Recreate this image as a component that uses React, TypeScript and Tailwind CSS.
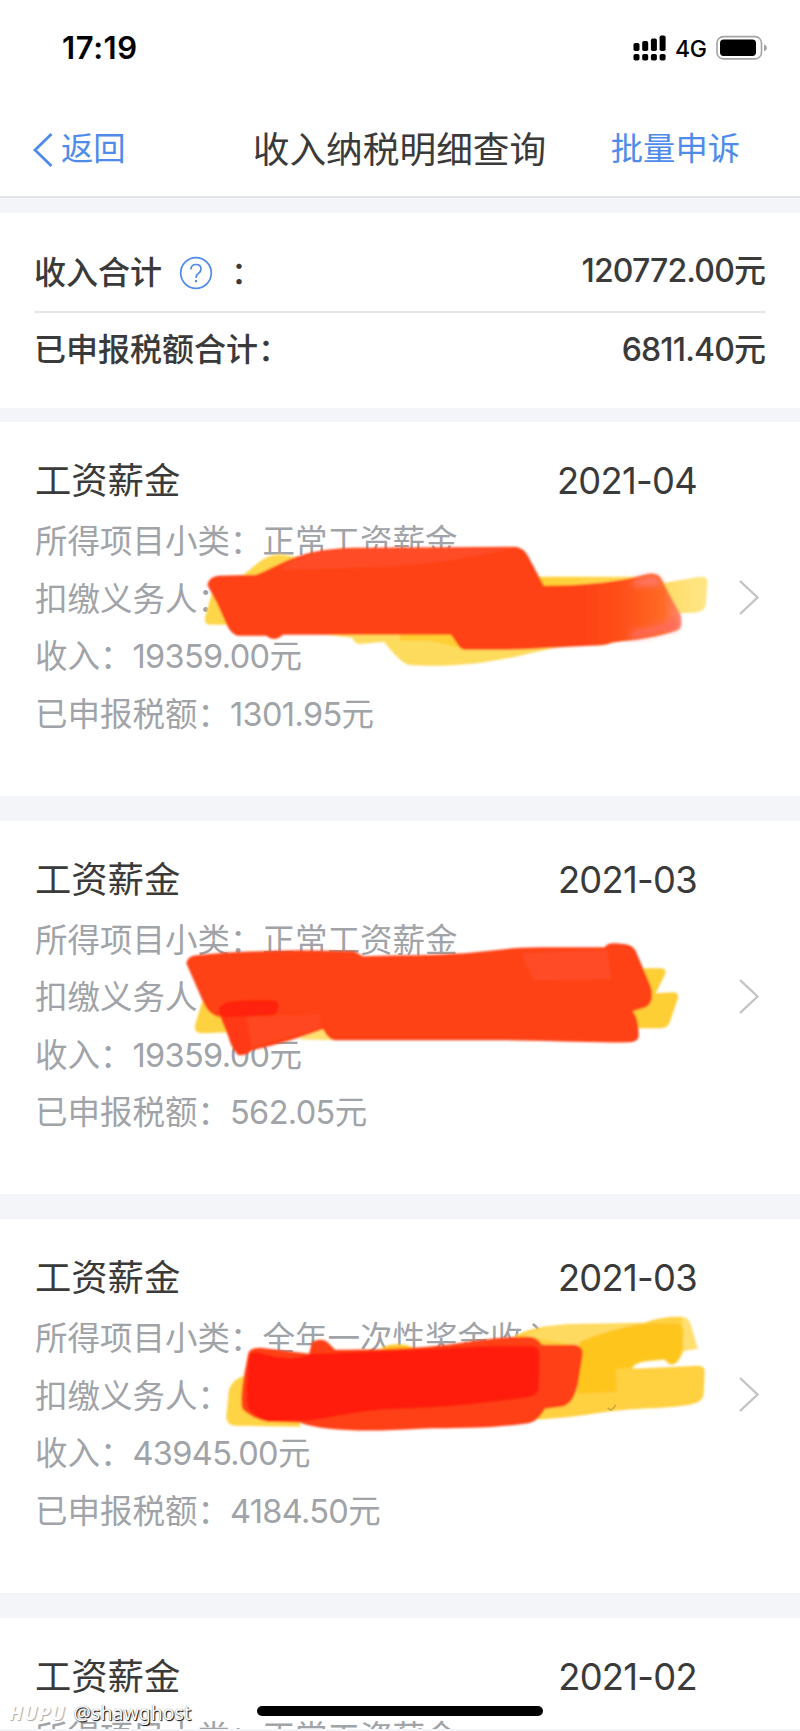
import type { ReactNode } from "react";

interface IncomeRecord {
    title: string;
    month: string;
    category: string;
    income: string;
    tax: string;
    marks?: ReactNode;
}

// Marker strokes use page coordinates, each card shifts its own viewBox
const AprilMarks = () => (
    <svg
        className="absolute inset-0 h-full w-full"
        viewBox="0 422 800 374"
        fill="none"
    >
        <defs>
            <linearGradient id="april-red" gradientUnits="userSpaceOnUse" x1="585" y1="0" x2="682" y2="0">
                <stop offset="0" stopColor="#ff4315" />
                <stop offset="0.4" stopColor="#ff501a" />
                <stop offset="0.8" stopColor="#ff6a24" />
                <stop offset="1" stopColor="#ff8878" />
            </linearGradient>
            <linearGradient id="april-yellow" gradientUnits="userSpaceOnUse" x1="540" y1="0" x2="700" y2="0">
                <stop offset="0" stopColor="#ffcf33" />
                <stop offset="0.7" stopColor="#ffd95a" />
                <stop offset="1" stopColor="#ffe483" />
            </linearGradient>
            <filter id="soft" x="-5%" y="-20%" width="110%" height="140%">
                <feGaussianBlur stdDeviation="1.1" />
            </filter>
            <filter id="softer" x="-50%" y="-50%" width="200%" height="200%">
                <feGaussianBlur stdDeviation="3" />
            </filter>
        </defs>
        <g filter="url(#soft)">
            <path
                d="M242 576 L258 563 Q270 553 284 555 L300 558 L300 600 L228 625 L209 625 Q203 624 205 617 L212 592 Z"
                fill="#fdd64a"
            />
            <path d="M535 577 H635 L665 583 L700 577 Q708 576 708 582 L706 606 Q704 613 693 613 L660 614 L540 600 Z" fill="url(#april-yellow)" />
            <path
                d="M300 632 L352 638 Q356 646 363 644 L384 642 C392 652 398 660 408 665 C440 668 480 665 520 656 C545 650 570 645 585 643 L585 630 Z"
                fill="#fddb5c"
            />
            <path d="M400 632 H454 L460 648 L430 641 L400 641 Z" fill="#ffce30" />
            <path
                d="M207 585 Q209 577 218 576 L256 575 C272 569 284 560 306 554 C330 548 350 548 370 548 L515 547 Q524 548 528 556 L544 586 C580 586 610 583 633 578 L650 574 Q659 573 662 580 L681 615 Q683 628 679 630 C660 637 635 640 612 643 Q607 646 590 646 C560 647 530 650 500 650 L467 650 Q461 651 458 645 L451 635 L283 635 Q274 643 266 636 L238 636 Q231 635 226 624 L217 604 Z"
                fill="url(#april-red)"
            />
            <path d="M282 567 C315 548 350 549 370 549 L515 548 Q480 556 440 562 C400 568 340 568 282 570 Z" fill="#ff4c28" />
        </g>
        <g filter="url(#softer)">
            <path d="M635 580 L652 576 L659 578 L662 586 Q648 585 634 587 Z" fill="#ff7766" />
            <path d="M632 631 Q655 628 677 618 L678 628 Q655 636 630 639 Z" fill="#ff6a5c" />
        </g>
    </svg>
);

const MarchMarks = () => (
    <svg
        className="absolute inset-0 h-full w-full"
        viewBox="0 820.5 800 374"
        fill="none"
    >
        <g filter="url(#soft)">
            <path d="M202 1001 L195 1024 Q193 1033 202 1033 L230 1032 L230 1008 Z" fill="#fdd240" />
            <path d="M298 1039 L325 1024 L334 1040 Z" fill="#ffe070" />
            <path
                d="M636 968 H662 Q668 969 665 975 L656 993 L674 992 Q680 993 678 999 L670 1022 Q668 1028 661 1028 L630 1028 L625 1000 Z"
                fill="#fece35"
            />
            <path
                d="M186 963 Q187 956 196 955 C230 951 260 951 300 950 L354 951 L363 956 L400 955 C440 955 470 953 495 950 Q515 947 540 947 L605 947 Q608 942 616 943 L626 944 Q634 945 637 953 L651 986 Q656 1005 643 1008 L633 1011 Q639 1018 639 1034 Q640 1042 630 1042 C590 1043 550 1040 500 1040 L334 1040 Q328 1039 323 1029 Q285 1043 252 1050 Q246 1056 238 1055 Q231 1048 228 1036 L220 1017 Q210 1016 204 1004 Z"
                fill="#ff4217"
            />
            <path d="M522 953 L607 950 L612 979 L534 980 Q529 970 522 955 Z" fill="#ff4b28" />
            <path d="M222 1018 L245 1016 Q248 1034 251 1046 Q246 1056 238 1054 Q230 1040 222 1018 Z" fill="#ff3916" />
            <path d="M248 1017 L320 1014 L320 1028 L251 1046 Z" fill="#ff4720" />
            <path d="M226 1002 Q250 999 273 1000 Q280 1001 278 1008 Q278 1015 270 1015 L224 1017 Q217 1014 219 1007 Z" fill="#ff2408" />
        </g>
    </svg>
);

const BonusMarks = () => (
    <svg
        className="absolute inset-0 h-full w-full"
        viewBox="0 1219 800 374"
        fill="none"
    >
        <g filter="url(#soft)">
            <path d="M246 1375 Q228 1381 228 1396 L226 1418 Q227 1426 236 1426 L300 1427 L300 1375 Z" fill="#fed444" />
            <path d="M380 1349 Q390 1343 405 1345 L420 1350 Z" fill="#ffc62a" />
            <path
                d="M515 1336 C535 1325 570 1323 600 1324 L645 1323 Q660 1317 680 1317 Q689 1317 691 1325 L698 1349 L684 1351 Q679 1364 673 1365 Q668 1365 665 1360 L644 1362 Q634 1364 633 1369 L698 1366 Q706 1366 705 1373 L704 1395 Q703 1403 690 1405 C660 1410 640 1407 600 1413 Q570 1418 535 1420 L500 1400 Z"
                fill="#ffd040"
            />
            <path d="M525 1336 C545 1325 570 1323 600 1325 L645 1324 Q615 1330 583 1341 L578 1346 Z" fill="#ffda60" />
            <path d="M682 1318 Q690 1318 692 1328 L698 1349 L684 1351 Z" fill="#ffdf70" />
            <path
                d="M580 1342 Q620 1326 648 1324 L678 1324 Q684 1325 684 1334 L682 1350 Q678 1364 672 1364 L665 1359 Q635 1360 630 1368 L616 1369 L617 1392 L578 1394 Z"
                fill="#fec51e"
            />
            <path
                d="M248 1354 Q249 1348 260 1348 L309 1354 L312 1342 Q323 1337 329 1344 L335 1350 C400 1350 440 1347 475 1341 Q510 1336 530 1337 Q538 1338 542 1345 L575 1345 Q583 1346 583 1354 L578 1385 Q573 1406 561 1407 L545 1409 Q538 1423 525 1424 C490 1429 460 1428 420 1429 C370 1432 325 1432 300 1423 L268 1422 Q253 1420 242 1409 Q240 1400 243 1380 Z"
                fill="#ff4014"
            />
            <path
                d="M249 1355 Q253 1350 266 1355 Q290 1362 312 1354 C390 1351 450 1349 490 1346 L530 1346 Q540 1346 540 1356 L539 1388 Q538 1397 525 1398 C480 1404 440 1408 400 1409 C345 1411 320 1422 300 1421 L268 1422 Q250 1415 247 1406 Q245 1390 249 1355 Z"
                fill="#ff1e08"
            />
        </g>
        <path d="M608 1408 Q612 1413 616 1405" stroke="#c8a53c" strokeWidth="1.5" />
    </svg>
);

const RECORDS: IncomeRecord[] = [
    { title: "工资薪金", month: "2021-04", category: "正常工资薪金", income: "19359.00", tax: "1301.95", marks: <AprilMarks /> },
    { title: "工资薪金", month: "2021-03", category: "正常工资薪金", income: "19359.00", tax: "562.05", marks: <MarchMarks /> },
    { title: "工资薪金", month: "2021-03", category: "全年一次性奖金收入", income: "43945.00", tax: "4184.50", marks: <BonusMarks /> },
    { title: "工资薪金", month: "2021-02", category: "正常工资薪金", income: "19359.00", tax: "562.05" },
];

const StatusBar = () => (
    <div className="flex h-[98px] items-start justify-between pt-[30px] pr-[32px] pl-[62px] text-black">
        <span className="text-[31px] leading-[36px] font-semibold tracking-[0.6px]">17:19</span>
        <div className="flex h-[36px] items-center">
            <svg className="h-[26px] w-[34px]" viewBox="0 0 34 26" fill="currentColor">
                <rect x="0.5" y="8" width="6" height="8" rx="1.8" />
                <rect x="9.2" y="6" width="6" height="10" rx="1.8" />
                <rect x="17.9" y="3.5" width="6" height="12.5" rx="1.8" />
                <rect x="26.6" y="0.5" width="6" height="15.5" rx="1.8" />
                <rect x="0.5" y="19" width="6" height="6.5" rx="1.8" />
                <rect x="9.2" y="19" width="6" height="6.5" rx="1.8" />
                <rect x="17.9" y="19" width="6" height="6.5" rx="1.8" />
                <rect x="26.6" y="19" width="6" height="6.5" rx="1.8" />
            </svg>
            <span className="ml-[8px] w-[33px] pt-[2px] text-[23px] leading-[34px] font-medium tracking-[-0.3px]">4G</span>
            <svg className="ml-[8px] h-[26px] w-[52px]" viewBox="0 0 52 26" fill="none">
                <rect x="1" y="1.6" width="44.5" height="22.3" rx="6.5" stroke="#a3a3a3" strokeWidth="1.6" />
                <rect x="4" y="4.6" width="36" height="16.3" rx="3.6" fill="#000" />
                <path d="M48 9.5 Q51 10.5 51 12.9 Q51 15.3 48 16.3 Z" fill="#a3a3a3" />
            </svg>
        </div>
    </div>
);

const NavBar = () => (
    <div className="grid h-[98px] grid-cols-[1fr_auto_1fr] items-center pt-[5px] text-[32.3px] text-[#4f8bea]">
        <div className="flex items-center pl-[33px]">
            <svg className="h-[36px] w-[20px]" viewBox="0 0 20 36" fill="none">
                <path d="M18.5 2 L2 18 L18.5 34" stroke="currentColor" strokeWidth="2.8" />
            </svg>
            <span className="ml-[8px]">返回</span>
        </div>
        <h1 className="-ml-px text-[36.7px] text-[#3a3a3a]">收入纳税明细查询</h1>
        <span className="justify-self-end pr-[60px]">批量申诉</span>
    </div>
);

const Summary = () => (
    <section className="h-[195px] shrink-0 bg-white px-[34px] text-[32px] font-medium text-[#3a3a3a]">
        <div className="flex h-[100px] items-center justify-between border-b-2 border-[#e6e6e6] pt-[22px]">
            <div className="flex items-center">
                <span>收入合计</span>
                <svg className="ml-[17px] h-[34px] w-[34px]" viewBox="0 0 34 34" fill="none" stroke="#4f8bea">
                    <circle cx="17" cy="17" r="15.3" strokeWidth="1.7" />
                    <path d="M12 13.5 Q12 8.5 17 8.5 Q22 8.5 22 13 Q22 15.5 19.5 17.3 Q17 19 17 22" strokeWidth="1.7" />
                    <path d="M17 24 V26.3" strokeWidth="2" />
                </svg>
                <span className="ml-[18px]">：</span>
            </div>
            <span className="mb-[5px]">
                <span className="tracking-[-0.85px]">120772.00</span>元
            </span>
        </div>
        <div className="flex h-[74px] items-center justify-between">
            <span>已申报税额合计：</span>
            <span>
                <span className="tracking-[-0.85px]">6811.40</span>元
            </span>
        </div>
    </section>
);

const Amount = ({ value }: { value: string }) => (
    <>
        <span className="tracking-[-0.65px]">{value}</span>元
    </>
);

const RecordCard = ({ record }: { record: IncomeRecord }) => (
    <article className="relative flex h-[373.5px] shrink-0 items-start justify-between bg-white pt-[28px] pr-[40px] pl-[35px]">
        <div className="w-[662px]">
            <div className="flex h-[63px] items-center justify-between text-[36.3px] text-[#3a3a3a]">
                <h2>{record.title}</h2>
                <span className="tracking-[-0.7px]">{record.month}</span>
            </div>
            <div className="text-[32.5px] leading-[57.5px] whitespace-nowrap text-[#a0a3a7]">
                <p>所得项目小类：{record.category}</p>
                <p>扣缴义务人：</p>
                <p>收入：<Amount value={record.income} /></p>
                <p>已申报税额：<Amount value={record.tax} /></p>
            </div>
        </div>
        <svg className="mt-[129px] h-[36px] w-[22px]" viewBox="0 0 22 36" fill="none">
            <path d="M2 2 L19.5 18.5 L2 35" stroke="#c4c4c4" strokeWidth="2.4" />
        </svg>
        {record.marks}
    </article>
);

const App = () => {
    return (
        <div
            lang="zh-CN"
            className="relative flex h-[1731px] w-[800px] flex-col overflow-hidden bg-[#f3f5f9] font-['Inter','Noto_Sans_CJK_SC',sans-serif]"
        >
            <header className="h-[198px] shrink-0 border-b-2 border-[#e3e4e6] bg-white">
                <StatusBar />
                <NavBar />
            </header>
            <main className="flex h-[1531px] flex-col overflow-hidden pt-[15px]">
                <Summary />
                <div className="mt-[14px] flex flex-col gap-[25px]">
                    {RECORDS.map((record, index) => (
                        <RecordCard key={index} record={record} />
                    ))}
                </div>
            </main>
            <div className="absolute bottom-[15px] left-[257px] h-[10px] w-[286px] rounded-full bg-black" />
            <div className="absolute bottom-[4px] left-[9px] flex items-baseline gap-[8px] font-['Noto_Sans'] text-[19.5px] leading-[28px] text-white">
                <span className="font-bold italic tracking-[1px] [text-shadow:1px_1px_1px_#aaa]">HUPU</span>
                <span className="[text-shadow:1px_1px_1px_#000,0_0_1px_#666]">@shawghost</span>
            </div>
        </div>
    );
};

export default App;
